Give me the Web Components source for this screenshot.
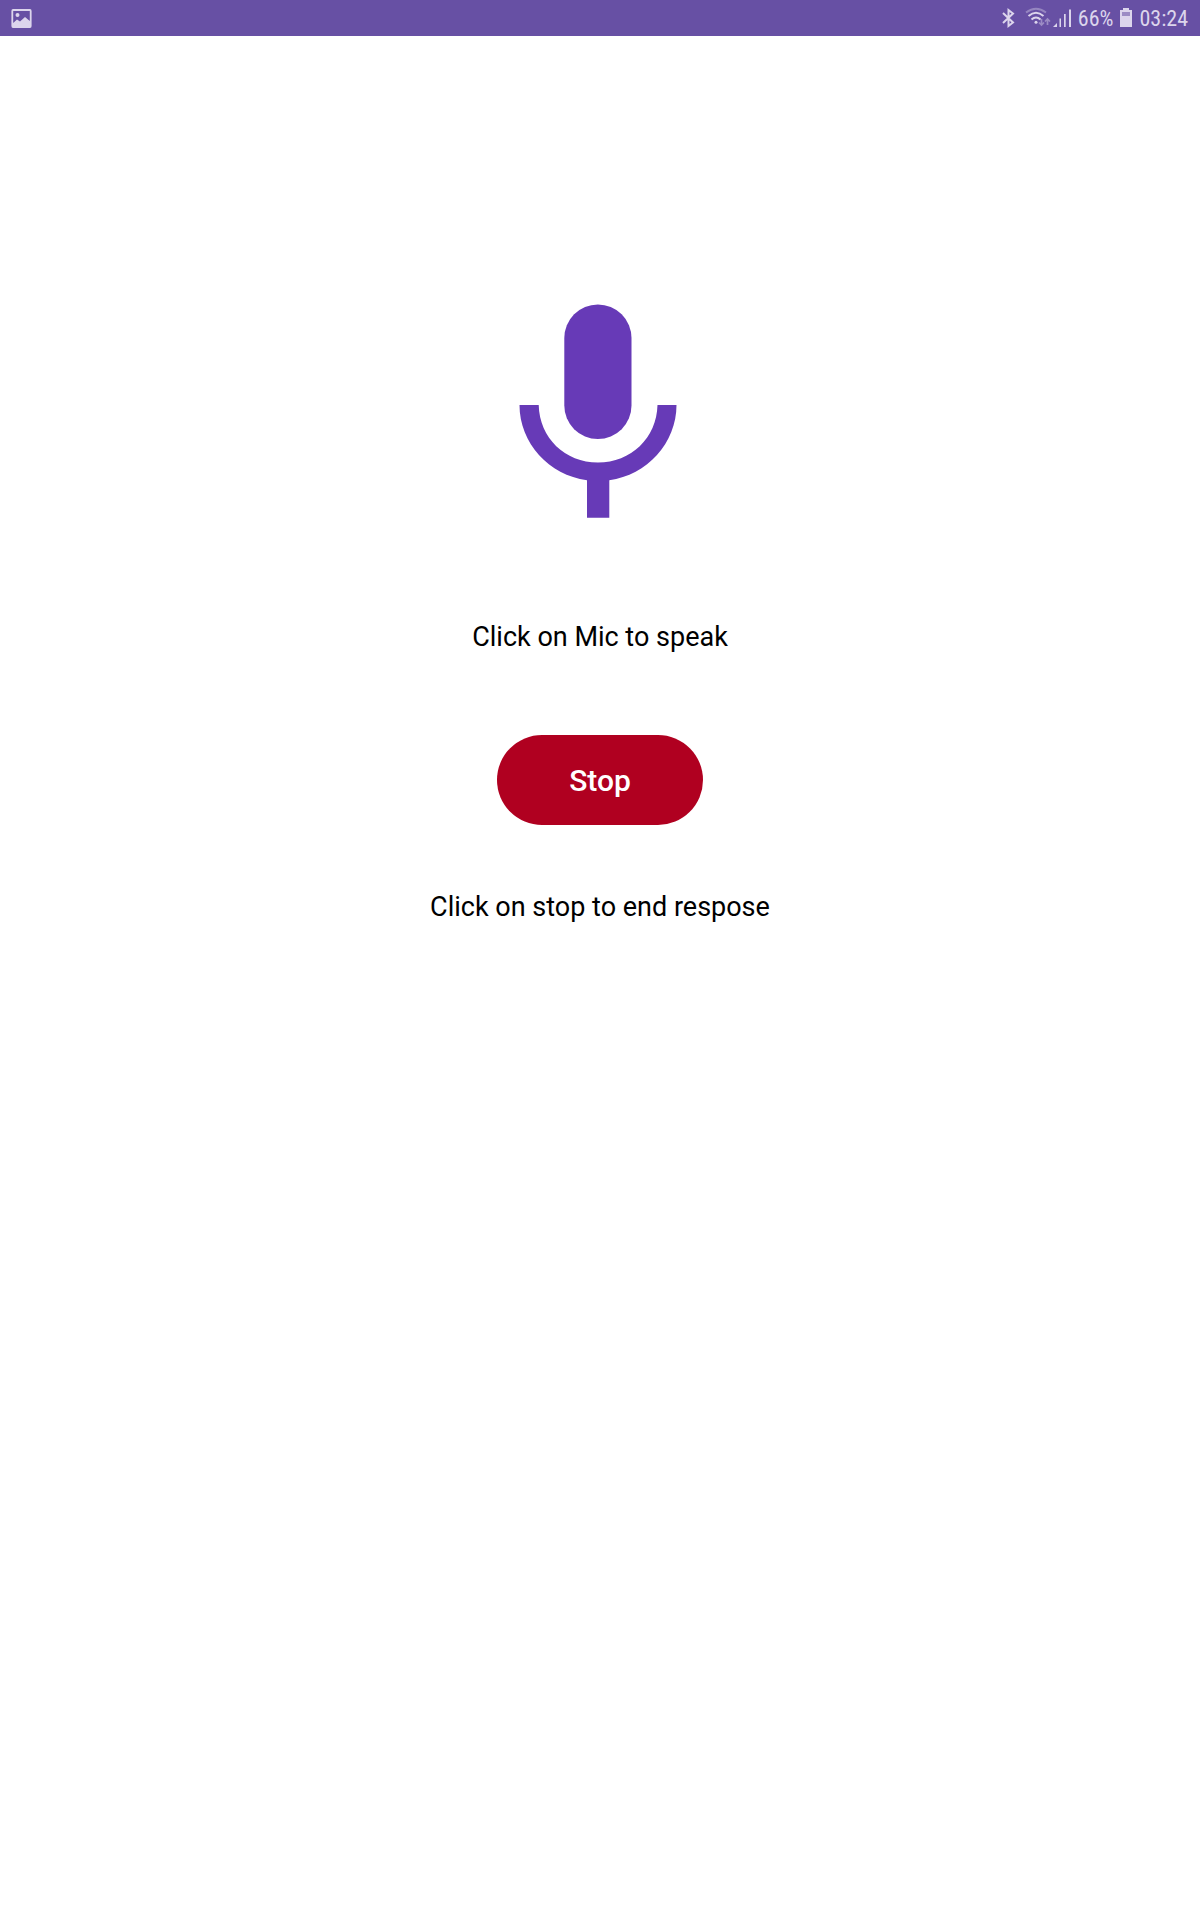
<!DOCTYPE html>
<html lang="en">
<head>
<meta charset="utf-8">
<meta name="viewport" content="width=device-width, initial-scale=1">
<title>Voice</title>
<style>
body { margin: 0; background: #fff; color: #000; font-family: Roboto, "Liberation Sans", sans-serif; }
</style>
</head>
<body>
<voice-screen></voice-screen>
<script>
const attach = (el, html) => { el.attachShadow({ mode: "open" }).innerHTML = html; };

customElements.define("status-bar", class extends HTMLElement {
  constructor() {
    super();
    attach(this, `
      <style>
        :host { display: flex; align-items: center; justify-content: space-between; height: 36px; padding: 0 12px 0 11px;
          box-sizing: border-box; background: #6750a4; color: #dcd5ec;
          font-family: "Roboto Condensed", Roboto, "Liberation Sans", sans-serif; font-size: 22px; line-height: 36px; }
        svg { display: block; fill: currentColor; }
        .right { display: flex; align-items: center; gap: 7px; }
        span, time { padding-top: 2px; line-height: 34px; }
      </style>
      <svg width="22" height="36" viewBox="0 0 22 36" role="img" aria-label="Screenshot saved">
        <path fill-rule="evenodd" d="M2 9H19Q20.600 9 20.600 11V26Q20.600 28 19 28H2Q.400 28 .400 26V11Q.400 9 2 9ZM2.200 11V23L6 19.500L9 21.500L14 17L18.800 21V11ZM6.500 13a2 2 0 1 1 0 4a2 2 0 1 1 0-4Z"/>
      </svg>
      <div class="right">
        <svg width="69" height="36" viewBox="0 0 69 36" role="img" aria-label="Bluetooth, Wi-Fi and mobile signal">
          <path d="M1 13L11 22.500L6.500 26V10L11 13.500L1 23" fill="none" stroke="currentColor" stroke-width="2"/>
          <g fill="none" stroke="currentColor" stroke-width="2">
            <path opacity=".4" d="M24 12.500Q34 5 44 12.500"/>
            <path d="M26.500 16Q34 9.500 41.500 16M29.500 19.500Q34 15.500 38.500 19.500"/>
          </g>
          <circle cx="34" cy="22.300" r="1.500"/>
          <path opacity=".45" fill="none" stroke="currentColor" stroke-width="1.700"
            d="M39.500 19V25M37 22.500L39.500 25L42 22.500M45.500 25V19M43 21.500L45.500 19L48 21.500"/>
          <path d="M51 27L55 23V27ZM57.500 18.500H59V27H57.500ZM62 14H63.700V27H62ZM67 9.500H69V27H67Z"/>
        </svg>
        <span>66%</span>
        <svg width="12" height="36" viewBox="0 0 12 36" role="img" aria-label="Battery">
          <path d="M3 8H9V10H12V27H0V10H3Z"/><path fill="#9c8cc4" d="M2 12H10V16H2Z"/>
        </svg>
        <time>03:24</time>
      </div>`);
  }
});

customElements.define("mic-button", class extends HTMLElement {
  constructor() {
    super();
    attach(this, `
      <style>
        :host { display: block; }
        button { display: block; padding: 0; border: 0; background: none; cursor: pointer; }
        svg { display: block; fill: #673ab7; }
      </style>
      <button type="button" aria-label="Speak">
        <svg width="200" height="240" viewBox="0 0 200 240" aria-hidden="true">
          <rect x="64.300" y="14.500" width="67.200" height="134.500" rx="33.600"/>
          <path d="M19.500 115H38.700C39.500 148 65 172.500 98 172.500S156.700 148 157.500 115H176.500C176.500 153 147 185 109.300 190.300V227.700H87V190.300C49 185 19.500 153 19.500 115Z"/>
        </svg>
      </button>`);
  }
});

customElements.define("stop-button", class extends HTMLElement {
  constructor() {
    super();
    attach(this, `
      <style>
        :host { display: block; }
        button { display: block; min-width: 206px; height: 90px; padding: 2px 48px 0; border: 0; border-radius: 45px;
          background: #b00020; color: #fff; font: 500 30px/36px Roboto, "Liberation Sans", sans-serif; cursor: pointer; }
      </style>
      <button type="button"><slot></slot></button>`);
  }
});

customElements.define("hint-text", class extends HTMLElement {
  constructor() {
    super();
    attach(this, `
      <style>
        :host { display: block; }
        p { margin: 0; font-size: 27px; line-height: 32px; text-align: center; }
      </style>
      <p><slot></slot></p>`);
  }
});

customElements.define("voice-screen", class extends HTMLElement {
  constructor() {
    super();
    attach(this, `
      <style>
        :host { display: flex; flex-direction: column; min-height: 100vh; }
        main { display: flex; flex-direction: column; align-items: center; padding: 254px 16px 48px; }
        .speak, .stop { display: flex; flex-direction: column; align-items: center; }
        .speak { gap: 91px; }
        .stop { gap: 66px; margin-top: 82px; }
      </style>
      <status-bar></status-bar>
      <main>
        <div class="speak"><mic-button></mic-button><hint-text>Click on Mic to speak</hint-text></div>
        <div class="stop"><stop-button>Stop</stop-button><hint-text>Click on stop to end respose</hint-text></div>
      </main>`);
  }
});
</script>
</body>
</html>
